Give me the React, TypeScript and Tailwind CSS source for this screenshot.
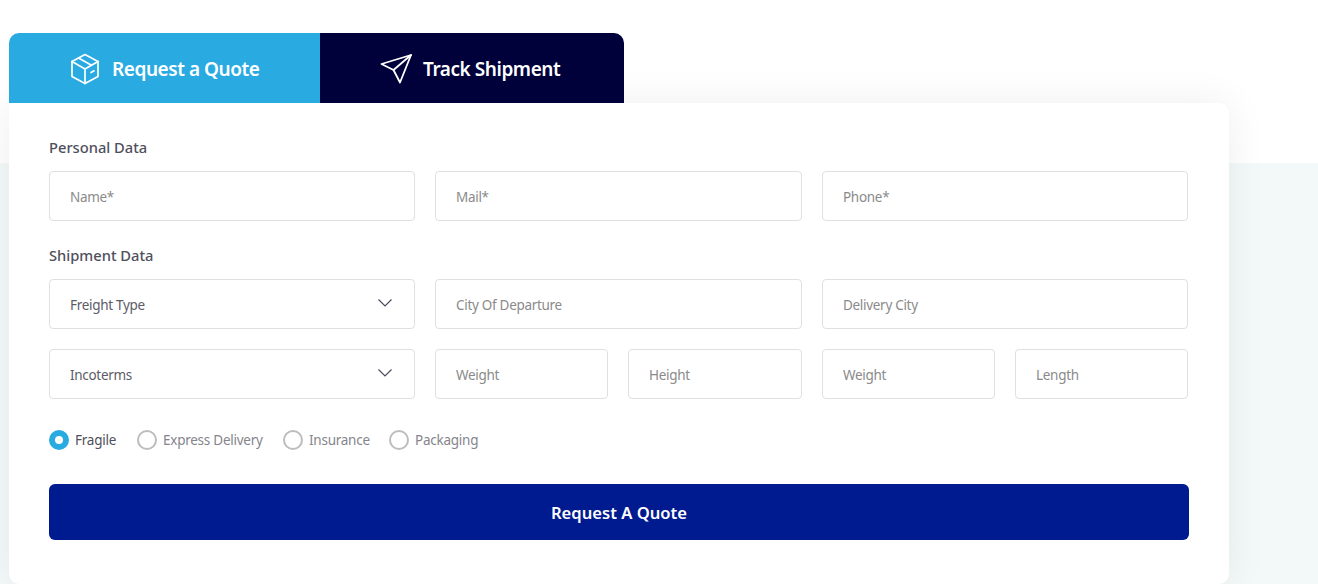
import React from "react";

const FONT = "font-['Noto_Sans','Liberation_Sans',sans-serif]";

function BoxIcon() {
  return (
    <svg width="30" height="32" viewBox="0 0 30 32" fill="none" stroke="white" strokeWidth="1.7" strokeLinejoin="round" strokeLinecap="round">
      <path d="M15 1.5 L28 8.5 V23.5 L15 30.5 L2 23.5 V8.5 Z" />
      <path d="M2 8.5 L15 16 L28 8.5 M15 16 V30.5" />
      <path d="M8.5 5 L21.5 12.2" />
      <path d="M21 19.5 L24 17.8" />
    </svg>
  );
}

function PlaneIcon() {
  return (
    <svg width="32" height="30" viewBox="0 0 32 30" fill="none" stroke="white" strokeWidth="1.8" strokeLinejoin="round" strokeLinecap="round">
      <path d="M31 1 L1.5 10 L13.5 16 L20 28.5 Z" />
      <path d="M31 1 L13.5 16" />
    </svg>
  );
}

function Chevron() {
  return (
    <svg width="14" height="8" viewBox="0 0 14 8" fill="none" stroke="#4b4b5c" strokeWidth="1.2">
      <path d="M0.5 0.5 L7 7 L13.5 0.5" />
    </svg>
  );
}

function Field({ placeholder }: { placeholder: string }) {
  return (
    <input
      placeholder={placeholder}
      className="h-[50px] w-full min-w-0 rounded-[4px] border border-[#e0e0e0] bg-white px-5 pt-[2px] text-[13.5px] tracking-[-0.3px] text-[#555] outline-none placeholder:text-[#8a8a8a]"
    />
  );
}

function SelectBox({ label }: { label: string }) {
  return (
    <div className="flex h-[50px] items-center justify-between rounded-[4px] border border-[#e0e0e0] bg-white pl-5 pr-[22px] text-[13.5px] tracking-[-0.3px] text-[#5c5c68]">
      <span className="pt-[3px]">{label}</span>
      <span className="-mt-[3px]"><Chevron /></span>
    </div>
  );
}

function Radio({ label, checked, className }: { label: string; checked?: boolean; className: string }) {
  return (
    <div className={`flex items-center gap-[6px] text-[13.5px] tracking-[-0.25px] ${className} ${checked ? "text-[#4f4f5c]" : "text-[#85858c]"}`}>
      {checked ? (
        <span className="flex h-5 w-5 items-center justify-center rounded-full bg-[#29abe2]">
          <span className="h-2 w-2 rounded-full bg-white"></span>
        </span>
      ) : (
        <span className="h-5 w-5 rounded-full border-2 border-[#bdbdbd] bg-white"></span>
      )}
      <span>{label}</span>
    </div>
  );
}

export default function App() {
  return (
    <div className={`${FONT} h-[584px] overflow-hidden bg-[linear-gradient(to_bottom,#ffffff_163px,#f3f8f8_163px)] pl-[9px] pt-[33px]`}>
      <div className="relative z-10 flex h-[70px] w-[615px] overflow-hidden rounded-t-[10px] text-[19px] font-semibold tracking-[-0.45px] text-white">
        <div className="flex w-[311px] items-center gap-[12px] bg-[#29abe2] pl-[61px] pt-[2px]">
          <BoxIcon />
          <span>Request a Quote</span>
        </div>
        <div className="flex w-[304px] items-center gap-[11px] bg-[#00003a] pl-[60px] pt-[2px]">
          <PlaneIcon />
          <span>Track Shipment</span>
        </div>
      </div>

      <div className="h-[481px] w-[1220px] rounded-[10px] rounded-tl-none bg-white px-10 pt-[34px] shadow-[0_0_40px_rgba(0,0,0,0.07)]">
        <h3 className="mb-[13px] h-[21px] text-[14.7px] font-medium leading-[21px] text-[#4f4f5c]">Personal Data</h3>
        <div className="grid grid-cols-[366px_367px_366px] gap-5">
          <Field placeholder="Name*" />
          <Field placeholder="Mail*" />
          <Field placeholder="Phone*" />
        </div>

        <h3 className="mb-[13px] mt-[24px] h-[21px] text-[14.7px] font-medium leading-[21px] text-[#4f4f5c]">Shipment Data</h3>
        <div className="grid grid-cols-[366px_367px_366px] gap-5">
          <SelectBox label="Freight Type" />
          <Field placeholder="City Of Departure" />
          <Field placeholder="Delivery City" />
          <SelectBox label="Incoterms" />
          <div className="col-span-2 grid grid-cols-[173px_174px_173px_173px] gap-5">
            <Field placeholder="Weight" />
            <Field placeholder="Height" />
            <Field placeholder="Weight" />
            <Field placeholder="Length" />
          </div>
        </div>

        <div className="mt-[31px] flex h-5 items-center">
          <Radio label="Fragile" checked className="w-[88px]" />
          <Radio label="Express Delivery" className="w-[146px]" />
          <Radio label="Insurance" className="w-[106px]" />
          <Radio label="Packaging" className="w-[110px]" />
        </div>

        <button className="mt-[34px] h-[56px] w-full rounded-[6px] bg-[#001a8f] pt-[2px] text-[16.6px] font-semibold text-white">
          Request A Quote
        </button>
      </div>
    </div>
  );
}
